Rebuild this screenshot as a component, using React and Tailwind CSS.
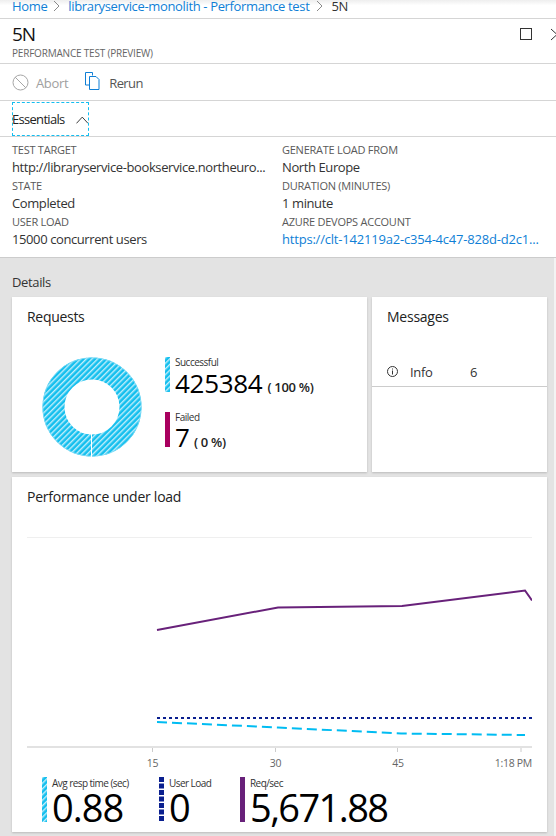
const F = "font-['Open_Sans','Noto_Sans',sans-serif]";

function Hatch({ id, className, width, height, children }) {
  return (
    <svg className={className} width={width} height={height} viewBox={`0 0 ${width} ${height}`}>
      <defs>
        <pattern id={id} width="4" height="4" patternUnits="userSpaceOnUse" patternTransform="rotate(45)">
          <rect width="4" height="4" fill="#14bfee" />
          <rect width="1.4" height="4" fill="#c4effb" />
        </pattern>
      </defs>
      {children}
    </svg>
  );
}

function Donut() {
  return (
    <Hatch id="donutHatch" width={100} height={100} className="shrink-0">
      <circle cx="50" cy="50" r="38.5" fill="none" stroke="url(#donutHatch)" strokeWidth="22" />
      <circle cx="50" cy="50" r="49.3" fill="none" stroke="#7fdcf6" strokeWidth="0.8" />
      <line x1="49.5" y1="77" x2="49.5" y2="100" stroke="#ffffff" strokeWidth="1" />
    </Hatch>
  );
}

function LegendBar({ kind, id, height = 35 }) {
  if (kind === "hatch") {
    return (
      <Hatch id={id} width={5} height={height} className="shrink-0">
        <rect width="5" height={height} fill={`url(#${id})`} />
      </Hatch>
    );
  }
  if (kind === "dash") {
    return (
      <svg width="5" height={height} className="shrink-0">
        <line x1="2.5" y1="0" x2="2.5" y2={height} stroke="#0a1f8f" strokeWidth="5" strokeDasharray="5 1.5" />
      </svg>
    );
  }
  return <div className="w-[5px] shrink-0" style={{ height, background: kind }} />;
}

function Field({ label, value, link }) {
  return (
    <div className="h-[36px] min-w-0">
      <div className="text-[11px] leading-[16px] text-[#595959] tracking-[-0.25px]">{label}</div>
      <div className={`text-[13px] leading-[18px] whitespace-nowrap ${link ? "text-[#0f7fd6] tracking-[-0.2px]" : "text-[#333333] tracking-[-0.4px]"}`}>{value}</div>
    </div>
  );
}

function Chart() {
  return (
    <svg width="505" height="219" viewBox="0 0 505 219" className="block">
      <line x1="0" y1="0.5" x2="505" y2="0.5" stroke="#efefef" />
      <polyline points="130,93 251,70.500 375,69 498,53.500 505,63.500" fill="none" stroke="#68217a" strokeWidth="2" />
      <line x1="130" y1="181" x2="505" y2="181" stroke="#0a1f8f" strokeWidth="2" strokeDasharray="3 3" />
      <polyline points="130,185 251,190.500 374,196.500 498,198" fill="none" stroke="#00bcf2" strokeWidth="2" strokeDasharray="10 5" />
      <line x1="0" y1="210" x2="505" y2="210" stroke="#e2e2e2" strokeWidth="2" />
      <path d="M125.500 211v4M248.500 211v4M370.500 211v4M494 211v4" stroke="#cccccc" />
    </svg>
  );
}

function Metric({ kind, id, label, value, className, valueClass }) {
  return (
    <div className={`flex gap-[5px] ${className}`}>
      <LegendBar kind={kind} id={id} height={45} />
      <div className="leading-none">
        <div className="text-[10px] leading-[12px] text-[#333333] tracking-[-0.55px]">{label}</div>
        <div className={`text-[38px] leading-[36px] text-black ${valueClass}`}>{value}</div>
      </div>
    </div>
  );
}

export default function App() {
  return (
    <div className={`${F} w-[556px] h-[836px] overflow-hidden bg-white flex flex-col`}>
      <div className="h-[19px] shrink-0 border-b border-[#d5d5d5] bg-gradient-to-b from-[#eeeeee] to-white to-[30%] flex items-center pl-[12px] text-[13px] tracking-[-0.35px] text-[#0f7fd6] leading-none pb-[6px]">
        <span>Home</span>
        <svg width="8" height="12" viewBox="0 0 8 12" className="ml-[6px] mr-[7px]"><path d="M1 1l5 5-5 5" fill="none" stroke="#8a8a8a" /></svg>
        <span>libraryservice-monolith - Performance test</span>
        <svg width="8" height="12" viewBox="0 0 8 12" className="ml-[7px] mr-[7px]"><path d="M1 1l5 5-5 5" fill="none" stroke="#8a8a8a" /></svg>
        <span className="text-[#333333]">5N</span>
      </div>

      <div className="h-[45px] shrink-0 border-b border-[#d5d5d5] flex justify-between pl-[12px] pt-[3px]">
        <div>
          <div className="text-[19px] leading-[24px] text-[#111111] tracking-[-1px]">5N</div>
          <div className="text-[10px] leading-[12px] text-[#666666] tracking-[-0.2px] mt-[1px]">PERFORMANCE TEST (PREVIEW)</div>
        </div>
        <div className="flex items-start gap-[18px] pt-[6px] -mr-[3px]">
          <div className="w-[12px] h-[12px] border border-[#333333]" />
          <svg width="9" height="13" viewBox="0 0 9 13"><path d="M1 1l6 5.500-6 5.500" fill="none" stroke="#333333" /></svg>
        </div>
      </div>

      <div className="h-[37px] shrink-0 border-b border-[#d5d5d5] flex items-center pl-[12px] text-[13px] tracking-[-0.35px]">
        <svg width="17" height="17" viewBox="0 0 17 17" className="mr-[7px]">
          <circle cx="8.500" cy="8.500" r="7.500" fill="none" stroke="#a6a6a6" />
          <path d="M3.200 3.200l10.600 10.600" stroke="#a6a6a6" />
        </svg>
        <span className="text-[#a0a0a0] mr-[17px] mt-[4px]">Abort</span>
        <svg width="15" height="18" viewBox="0 0 15 18" className="mr-[9px] -mt-[2px]">
          <path d="M.5.500h7v3M.5.500v12.500h4" fill="none" stroke="#0f7fd6" />
          <path d="M4.500 4.500h6.500l3 3v10h-9.500z" fill="#fff" stroke="#0f7fd6" />
        </svg>
        <span className="text-[#555555] mt-[4px] tracking-[-0.6px]">Rerun</span>
      </div>

      <div className="h-[36px] shrink-0 border-b border-[#d5d5d5] pl-[12px] pt-[1px]">
        <div className="w-[77px] h-[34px] border border-dashed border-[#14bdf0] flex items-center gap-[11px] text-[13px] tracking-[-0.7px] text-[#222222] -mb-[2px]">
          <span className="mt-[2px] -ml-[1px]">Essentials</span>
          <svg width="13" height="8" viewBox="0 0 13 8" className="mt-[2px]"><path d="M.5 7.500l6-6.500 6 6.500" fill="none" stroke="#333333" /></svg>
        </div>
      </div>

      <div className="h-[121px] shrink-0 pl-[12px] pt-[5px] grid grid-cols-[270px_1fr] content-start border-b border-[#cccccc]">
        <Field label="TEST TARGET" value="http://libraryservice-bookservice.northeuro..." />
        <Field label="GENERATE LOAD FROM" value="North Europe" />
        <Field label="STATE" value="Completed" />
        <Field label="DURATION (MINUTES)" value="1 minute" />
        <Field label="USER LOAD" value="15000 concurrent users" />
        <Field label="AZURE DEVOPS ACCOUNT" value="https://clt-142119a2-c354-4c47-828d-d2c1..." link />
      </div>

      <div className="flex-1 bg-[#f3f3f3]">
        <div className="h-full bg-[#e3e3e3] mr-[2px] pl-[12px]">
          <div className="h-[39px] pt-[15px] text-[13px] leading-[19px] tracking-[-0.35px] text-[#333333]">Details</div>
          <div className="flex gap-[5px]">
            <div className="w-[355px] h-[175px] bg-white shadow-[0_1px_2px_rgba(0,0,0,0.18)] pl-[15px] pt-[10px]">
              <div className="text-[14px] leading-[19px] tracking-[-0.3px] text-[#222222]">Requests</div>
              <div className="flex mt-[31px] pl-[15px]">
                <div><Donut /></div>
                <div className="ml-[23px] flex flex-col gap-[20px]">
                  <div className="flex gap-[5px] h-[35px]">
                    <LegendBar kind="hatch" id="okHatch" />
                    <div>
                      <div className="text-[10px] leading-[11px] text-[#333333] tracking-[-0.5px]">Successful</div>
                      <div className="flex items-baseline text-black mt-[3px]">
                        <span className="text-[26px] leading-[25px] tracking-[-0.3px]">425384</span>
                        <span className="text-[13px] leading-[13px] font-semibold ml-[5px] tracking-[-0.3px] text-[#222222] -translate-y-[1px]">( 100 %)</span>
                      </div>
                    </div>
                  </div>
                  <div className="flex gap-[5px] h-[35px]">
                    <LegendBar kind="#a9005f" />
                    <div>
                      <div className="text-[10px] leading-[11px] text-[#333333] tracking-[-0.5px]">Failed</div>
                      <div className="flex items-baseline text-black mt-[2px]">
                        <span className="text-[26px] leading-[25px]">7</span>
                        <span className="text-[13px] leading-[13px] font-semibold ml-[4px] tracking-[-0.3px] text-[#222222]">( 0 %)</span>
                      </div>
                    </div>
                  </div>
                </div>
              </div>
            </div>
            <div className="w-[175px] h-[175px] bg-white shadow-[0_1px_2px_rgba(0,0,0,0.18)] pt-[10px]">
              <div className="pl-[15px] text-[14px] leading-[19px] tracking-[-0.25px] text-[#222222]">Messages</div>
              <div className="mt-[26px] h-[35px] border-b border-[#cccccc] flex items-center pl-[15px] text-[13px] tracking-[-0.35px] text-[#333333] pt-[8px] pb-[1px]">
                <svg width="11" height="11" viewBox="0 0 11 11" className="mr-[12px] -mt-[2px]">
                  <circle cx="5.500" cy="5.500" r="5" fill="none" stroke="#333333" />
                  <path d="M5.500 4.500v4M5.500 2.500v1" stroke="#333333" />
                </svg>
                <span className="w-[60px]">Info</span>
                <span>6</span>
              </div>
            </div>
          </div>
          <div className="mt-[5px] w-[535px] h-[355px] bg-white shadow-[0_1px_2px_rgba(0,0,0,0.18)] pl-[15px] pt-[10px]">
            <div className="text-[14px] leading-[19px] tracking-[-0.25px] text-[#222222]">Performance under load</div>
            <div className="mt-[31px]"><Chart /></div>
            <div className="flex w-[505px] pl-[64px] h-[14px] text-[10.5px] leading-[14px] text-[#666666] tracking-[-0.3px]">
              <span className="w-[123px] text-center">15</span>
              <span className="w-[123px] text-center">30</span>
              <span className="w-[122px] text-center">45</span>
              <span className="flex-1 text-right">1:18 PM</span>
            </div>
            <div className="flex mt-[7px] pl-[15px]">
              <Metric kind="hatch" id="respHatch" label="Avg resp time (sec)" value="0.88" className="w-[117px]" valueClass="tracking-[-1px]" />
              <Metric kind="dash" label="User Load" value="0" className="w-[81px]" valueClass="tracking-[-1px]" />
              <Metric kind="#68217a" label="Req/sec" value="5,671.88" valueClass="tracking-[-1.6px]" />
            </div>
          </div>
        </div>
      </div>
    </div>
  );
}
